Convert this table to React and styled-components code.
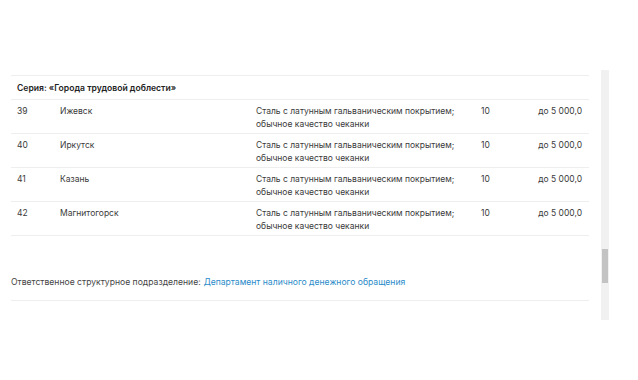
import React from 'react';
import styled, { createGlobalStyle } from 'styled-components';

const GlobalStyle = createGlobalStyle`
  html, body {
    margin: 0;
    padding: 0;
    background: #fff;
  }
  body {
    font-family: Inter, "Noto Sans", "Liberation Sans", sans-serif;
    color: #333;
  }
`;

const Page = styled.div`
  display: flex;
  align-items: flex-start;
  width: 638px;
  height: 380px;
  overflow: hidden;
`;

const Content = styled.div`
  width: 578px;
  margin-left: 11px;
  padding-top: 75px;
  display: flex;
  flex-direction: column;
`;

const Table = styled.div`
  border-top: 1px solid #eeeeee;
`;

const SeriesRow = styled.div`
  height: 23px;
  display: flex;
  align-items: center;
  padding-left: 6px;
  font-size: 8.6px;
  font-weight: 600;
  color: #222;
  border-bottom: 1px solid #eeeeee;
`;

const Row = styled.div`
  display: grid;
  grid-template-columns: 43px 196px 225px 50px 1fr;
  padding: 5px 7px 0 6px;
  box-sizing: border-box;
  height: 34px;
  border-bottom: 1px solid #eeeeee;
  font-size: 8.5px;
  line-height: 13px;
  color: #3a3a3a;
`;

const Cell = styled.div`
  white-space: pre-line;
  text-align: ${(p) => (p.$right ? 'right' : 'left')};
`;

const Footer = styled.div`
  margin-top: 35px;
  height: 22px;
  padding-bottom: 7px;
  display: flex;
  align-items: center;
  font-size: 8.6px;
  color: #444;
  border-bottom: 1px solid #eeeeee;
`;

const Link = styled.a`
  color: #2a8bc9;
  text-decoration: none;
  margin-left: 3px;
`;

const Track = styled.div`
  margin-left: 12px;
  margin-top: 70px;
  width: 8px;
  height: 250px;
  background: #f1f1f1;
  display: flex;
  flex-direction: column;
  align-items: center;
  padding-top: 179px;
  box-sizing: border-box;
`;

const Thumb = styled.div`
  width: 6px;
  height: 34px;
  background: #c3c3c3;
`;

const material = 'Сталь с латунным гальваническим покрытием;\nобычное качество чеканки';

const rows = [
  { n: '39', city: 'Ижевск' },
  { n: '40', city: 'Иркутск' },
  { n: '41', city: 'Казань' },
  { n: '42', city: 'Магнитогорск' },
];

export default function App() {
  return (
    <>
      <GlobalStyle />
      <Page>
        <Content>
          <Table>
            <SeriesRow>Серия: «Города трудовой доблести»</SeriesRow>
            {rows.map((r) => (
              <Row key={r.n}>
                <Cell>{r.n}</Cell>
                <Cell>{r.city}</Cell>
                <Cell>{material}</Cell>
                <Cell>10</Cell>
                <Cell $right>до 5 000,0</Cell>
              </Row>
            ))}
          </Table>
          <Footer>
            Ответственное структурное подразделение:
            <Link href="#">Департамент наличного денежного обращения</Link>
          </Footer>
        </Content>
        <Track>
          <Thumb />
        </Track>
      </Page>
    </>
  );
}
